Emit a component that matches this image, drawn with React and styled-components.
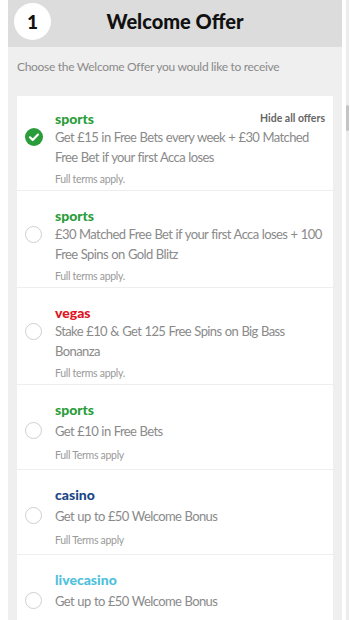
import React from 'react';
import styled, { createGlobalStyle } from 'styled-components';

const GlobalStyle = createGlobalStyle`
  html, body {
    margin: 0;
    padding: 0;
    background: #ffffff;
  }
  body {
    padding: 0 8px;
    font-family: Lato, "Open Sans", Arial, sans-serif;
  }
`;

const Panel = styled.div`
  background: #efefef;
  min-height: 640px;
`;

const Header = styled.div`
  height: 47px;
  background: #dcdcdc;
  display: flex;
  align-items: center;
  padding-left: 6px;
`;

const StepBadge = styled.div`
  width: 37px;
  height: 37px;
  border-radius: 50%;
  background: #ffffff;
  display: flex;
  align-items: center;
  justify-content: center;
  font-weight: 900;
  font-size: 19px;
  color: #111;
  margin-top: -5px;
`;

const Title = styled.h1`
  flex: 1;
  margin: -5px 43px 0 0;
  text-align: center;
  font-size: 20px;
  font-weight: 900;
  color: #111;
`;

const Intro = styled.p`
  margin: 0;
  padding: 12px 9px 0;
  height: 37px;
  font-size: 12px;
  letter-spacing: -0.3px;
  color: #8a8a8a;
  line-height: 16px;
`;

const Card = styled.div`
  margin: 0 9px;
  background: #ffffff;
`;

const Row = styled.div`
  display: grid;
  grid-template-columns: 30px 1fr;
  padding: ${({ first }) => (first ? '13px' : '15px')} 8px 4px 8px;
  min-height: 85px;
  box-sizing: border-box;
  border-bottom: 1px solid #eeeeee;
`;

const LabelLine = styled.div`
  grid-column: 2;
  display: flex;
  justify-content: space-between;
  align-items: center;
  height: 18px;
`;

const Brand = styled.span`
  font-size: 14px;
  font-weight: 900;
  color: ${({ color }) => color};
`;

const HideLink = styled.span`
  font-size: 10.5px;
  font-weight: 700;
  color: #666;
`;

const RadioCell = styled.div`
  grid-column: 1;
  grid-row: 2;
  height: 20px;
  display: flex;
  align-items: center;
`;

const Radio = styled.div`
  width: 17px;
  height: 17px;
  box-sizing: border-box;
  border-radius: 50%;
  border: 1px solid #cfcfcf;
  background: #fff;
`;

const Offer = styled.div`
  grid-column: 2;
  grid-row: 2;
  font-size: 13px;
  letter-spacing: -0.6px;
  word-spacing: 0.5px;
  line-height: 20px;
  color: #8a8a8a;
`;

const Terms = styled.div`
  grid-column: 2;
  grid-row: 3;
  margin-top: 5px;
  font-size: 10.5px;
  letter-spacing: -0.3px;
  line-height: 14px;
  color: #999;
`;

const ScrollTrack = styled.div`
  position: fixed;
  top: 0;
  right: 1px;
  width: 3px;
  height: 100%;
  background: #ececec;
`;

const ScrollThumb = styled.div`
  position: absolute;
  top: 105px;
  left: 0;
  width: 3px;
  height: 26px;
  background: #c4c4c4;
  border-radius: 2px;
`;

const CheckIcon = () => (
  <svg width="18" height="18" viewBox="0 0 18 18">
    <circle cx="9" cy="9" r="9" fill="#2a9d3a" />
    <path d="M5 9.3l2.7 2.7L13 6.6" fill="none" stroke="#fff" strokeWidth="2.2" strokeLinecap="round" strokeLinejoin="round" />
  </svg>
);

const offers = [
  { brand: 'sports', color: '#2a9d3a', text: 'Get £15 in Free Bets every week + £30 Matched Free Bet if your first Acca loses', terms: 'Full terms apply.', checked: true },
  { brand: 'sports', color: '#2a9d3a', text: '£30 Matched Free Bet if your first Acca loses + 100 Free Spins on Gold Blitz', terms: 'Full terms apply.' },
  { brand: 'vegas', color: '#e0141e', text: 'Stake £10 & Get 125 Free Spins on Big Bass Bonanza', terms: 'Full terms apply.' },
  { brand: 'sports', color: '#2a9d3a', text: 'Get £10 in Free Bets', terms: 'Full Terms apply' },
  { brand: 'casino', color: '#1c4687', text: 'Get up to £50 Welcome Bonus', terms: 'Full Terms apply' },
  { brand: 'livecasino', color: '#4fc1dc', text: 'Get up to £50 Welcome Bonus', terms: 'Full Terms apply' },
];

const App = () => {
  return (
    <>
      <GlobalStyle />
      <Panel>
        <Header>
          <StepBadge>1</StepBadge>
          <Title>Welcome Offer</Title>
        </Header>
        <Intro>Choose the Welcome Offer you would like to receive</Intro>
        <Card>
          {offers.map((item, index) => (
            <Row key={index} first={index === 0}>
              <LabelLine>
                <Brand color={item.color}>{item.brand}</Brand>
                {index === 0 && <HideLink>Hide all offers</HideLink>}
              </LabelLine>
              <RadioCell>
                {item.checked ? <CheckIcon /> : <Radio />}
              </RadioCell>
              <Offer>{item.text}</Offer>
              <Terms>{item.terms}</Terms>
            </Row>
          ))}
        </Card>
      </Panel>
      <ScrollTrack>
        <ScrollThumb />
      </ScrollTrack>
    </>
  );
};

export default App;
